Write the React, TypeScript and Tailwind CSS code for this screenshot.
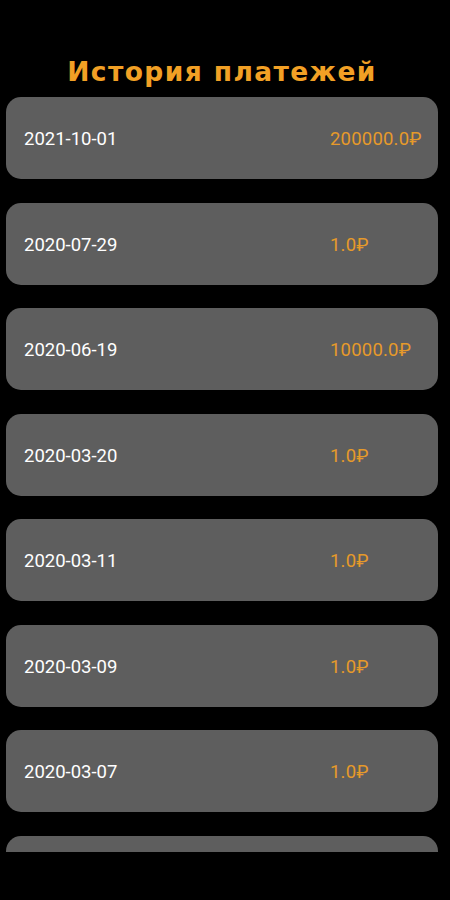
import React from "react";

const rows = [
  ["2021-10-01", "200000.0₽"],
  ["2020-07-29", "1.0₽"],
  ["2020-06-19", "10000.0₽"],
  ["2020-03-20", "1.0₽"],
  ["2020-03-11", "1.0₽"],
  ["2020-03-09", "1.0₽"],
  ["2020-03-07", "1.0₽"],
  ["", ""],
];

export default function App() {
  return (
    <div className="w-[450px] h-[900px] bg-black overflow-hidden" style={{ fontFamily: "Roboto, 'Noto Sans', sans-serif" }}>
      <div className="ml-[6px] w-[432px] pt-[55px] h-[97px] text-center">
        <h1
          className="text-[26.5px] leading-[34px] font-bold text-[#f2a025] tracking-[1.4px]"
          style={{ fontFamily: "'DejaVu Sans', Verdana, sans-serif" }}
        >
          История платежей
        </h1>
      </div>
      <div className="h-[755px] overflow-hidden">
        <div className="flex flex-col gap-[23.5px] ml-[6px] w-[432px]">
          {rows.map(([d, a], i) => (
            <div key={i} className="h-[82px] shrink-0 rounded-[15px] bg-[#5e5e5e] flex items-center pl-[18px]">
              <div className="w-[306px] text-white text-[18.5px] leading-none pt-[3px]">{d}</div>
              <div className="text-[#e69a2a] text-[18.5px] leading-none pt-[3px] tracking-[0.2px]">{a}</div>
            </div>
          ))}
        </div>
      </div>
    </div>
  );
}
